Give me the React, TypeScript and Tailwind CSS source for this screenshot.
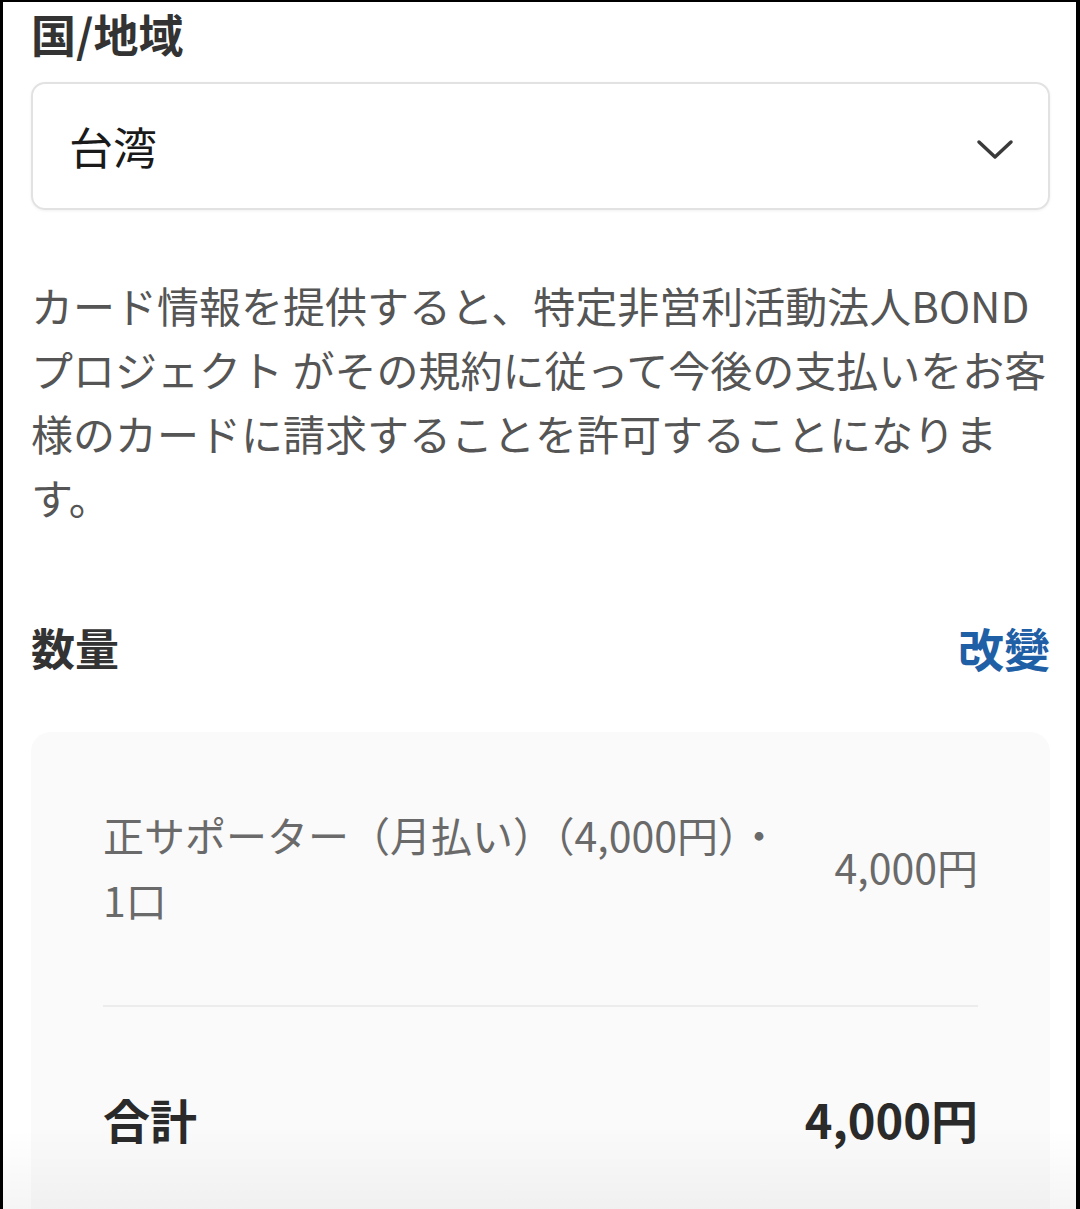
import React from 'react';

const font = { fontFamily: '"Noto Sans CJK JP", "Noto Sans", sans-serif' };

function Chevron() {
    return (
        <svg width="38" height="22" viewBox="0 0 38 22" fill="none" className="mt-[8px]">
            <path d="M3 3 L19 18 L35 3" stroke="#3a3a3a" strokeWidth="3.5" strokeLinecap="round" strokeLinejoin="round" />
        </svg>
    );
}

export default function App() {
    return (
        <div className="bg-black pt-[2px] pl-[3px] pr-[4px] h-[1209px] overflow-hidden" style={font}>
            <div className="relative bg-white h-full overflow-hidden">
                <div className="pl-[28px] pr-[26px]">
                    <div className="text-[45px] leading-[64px] font-bold text-[#333]">国/地域</div>

                    <div className="mt-[16px] h-[128px] flex items-center justify-between rounded-[14px] border-2 border-[#e2e2e2] shadow-[0_1px_3px_rgba(0,0,0,0.06)] pl-[36px] pr-[34px]">
                        <span className="text-[44px] text-[#1a1a1a]">台湾</span>
                        <Chevron />
                    </div>

                    <p className="mt-[63px] text-[42px] leading-[64px] text-[#555] whitespace-nowrap">
                        カード情報を提供すると、特定非営利活動法人BOND<br />
                        プロジェクト がその規約に従って今後の支払いをお客<br />
                        様のカードに請求することを許可することになりま<br />
                        す。
                    </p>

                    <div className="mt-[87px] flex items-center justify-between">
                        <span className="text-[44px] leading-[63px] font-bold text-[#333]">数量</span>
                        <span className="text-[46px] leading-[63px] font-bold text-[#1f5fa6]">改變</span>
                    </div>

                    <div className="mt-[53px] bg-[#fafafa] rounded-[20px] pl-[72px] pr-[72px] pt-[70px] pb-[120px]">
                        <div className="flex items-center justify-between">
                            <div className="text-[41px] leading-[65px] text-[#6a6a6a] whitespace-nowrap">
                                正サポーター（月払い）（4,000円）・<br />
                                1口
                            </div>
                            <div className="text-[41px] text-[#6a6a6a]">4,000円</div>
                        </div>
                        <div className="mt-[73px] h-[2px] bg-[#ececec]" />
                        <div className="mt-[78px] flex items-center justify-between">
                            <span className="text-[47px] leading-[68px] font-bold text-[#2a2a2a]">合計</span>
                            <span className="text-[47px] leading-[68px] font-bold text-[#2a2a2a]">4,000円</span>
                        </div>
                    </div>
                </div>
                <div className="absolute left-0 right-0 bottom-0 h-[80px] bg-gradient-to-b from-transparent to-[rgba(0,0,0,0.04)]" />
            </div>
        </div>
    );
}
